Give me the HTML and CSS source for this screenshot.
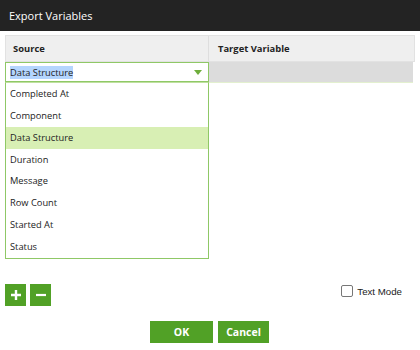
FILE: index.html
```html
<!DOCTYPE html>
<html>
<head>
<meta charset="utf-8">
<link rel="stylesheet" href="styles.css">
</head>
<body>
<div class="dialog">
  <div class="titlebar">Export Variables</div>
  <div class="content">
    <div class="table">
      <div class="thead">
        <div class="th th-source">Source</div>
        <div class="th th-target">Target Variable</div>
      </div>
      <div class="row">
        <div class="cell-source">
          <div class="select">
            <span class="sel-text">Data Structure</span>
            <span class="caret"></span>
          </div>
          <div class="menu">
            <div class="opt">Completed At</div>
            <div class="opt">Component</div>
            <div class="opt active">Data Structure</div>
            <div class="opt">Duration</div>
            <div class="opt">Message</div>
            <div class="opt">Row Count</div>
            <div class="opt">Started At</div>
            <div class="opt">Status</div>
          </div>
        </div>
        <div class="cell-target"></div>
      </div>
    </div>
    <div class="spacer"></div>
    <div class="tools">
      <div class="btns">
        <button class="icon-btn" aria-label="add">
          <svg width="12" height="12" viewBox="0 0 12 12"><path d="M6 1v10M1 6h10" stroke="#fff" stroke-width="2.4"/></svg>
        </button>
        <button class="icon-btn" aria-label="remove">
          <svg width="12" height="12" viewBox="0 0 12 12"><path d="M1 6h10" stroke="#fff" stroke-width="2.2"/></svg>
        </button>
      </div>
      <label class="textmode"><span class="cb"></span>Text Mode</label>
    </div>
    <div class="footer">
      <button class="btn btn-ok">OK</button>
      <button class="btn btn-cancel">Cancel</button>
    </div>
  </div>
</div>
</body>
</html>
```
FILE: styles.css
```css
html, body {
  margin: 0;
  padding: 0;
  background: #fff;
}
body {
  width: 420px;
  height: 350px;
  overflow: hidden;
  font-family: "Open Sans", "DejaVu Sans", sans-serif;
  color: #222;
}
.dialog {
  display: flex;
  flex-direction: column;
  height: 350px;
}
.titlebar {
  height: 31px;
  background: #232323;
  color: #fff;
  font-size: 11px;
  line-height: 31px;
  padding-left: 9px;
  box-sizing: border-box;
}
.content {
  padding: 4px 5px 0 5px;
  display: flex;
  flex-direction: column;
  flex: 1;
}
.table {
  width: 410px;
}
.thead {
  display: flex;
  height: 27px;
  background: #efefef;
  border: 1px solid #e2e2e2;
  box-sizing: border-box;
}
.th {
  font-size: 9.4px;
  font-weight: 700;
  line-height: 25px;
  color: #222;
}
.th-source {
  width: 203px;
  padding-left: 7px;
  box-sizing: border-box;
  border-right: 1px solid #dedede;
}
.th-target {
  padding-left: 9px;
}
.row {
  display: flex;
  height: 20px;
  background: #dcdcdc;
  width: 408px;
  border-bottom: 1px solid #e3f0cf;
}
.cell-source {
  width: 204px;
  position: relative;
}
.cell-target {
  flex: 1;
}
.select {
  height: 20px;
  box-sizing: border-box;
  border: 1px solid #8fc866;
  background: #fff;
  display: flex;
  align-items: center;
  padding-left: 4px;
  padding-right: 6px;
  justify-content: space-between;
}
.sel-text {
  font-size: 9.3px;
  background: #b4d5fe;
  line-height: 13px;
}
.caret {
  width: 0;
  height: 0;
  border-left: 4.5px solid transparent;
  border-right: 4.5px solid transparent;
  border-top: 5px solid #6fae3c;
}
.menu {
  position: absolute;
  left: 0;
  top: 20px;
  width: 204px;
  box-sizing: border-box;
  border: 1px solid #8fc866;
  border-top: 1px solid #bfe09f;
  background: #fff;
  z-index: 2;
}
.opt {
  height: 21.85px;
  line-height: 21.85px;
  font-size: 9.3px;
  padding-left: 4px;
  color: #222;
}
.opt.active {
  background: #d8efb4;
}
.spacer {
  height: 201px;
}
.tools {
  display: flex;
  justify-content: space-between;
  align-items: flex-start;
}
.btns {
  display: flex;
  gap: 4px;
}
.icon-btn {
  width: 21px;
  height: 22px;
  border: none;
  padding: 0;
  margin: 0;
  background: #51a126;
  display: flex;
  align-items: center;
  justify-content: center;
}
.textmode {
  display: flex;
  align-items: center;
  font-size: 9.7px;
  color: #222;
  margin-top: 1px;
  margin-right: 13px;
  font-family: "Liberation Sans", Arial, sans-serif;
}
.cb {
  width: 10px;
  height: 10px;
  border: 1px solid #777;
  border-radius: 2px;
  margin-right: 4px;
  background: #fff;
}
.footer {
  display: flex;
  justify-content: center;
  gap: 5px;
  margin-top: 15px;
  padding-right: 1px;
}
.btn {
  height: 22px;
  border: none;
  padding: 0;
  margin: 0;
  background: #51a126;
  color: #fff;
  font-family: "Open Sans", sans-serif;
  font-weight: 700;
  font-size: 10.5px;
}
.btn-ok {
  width: 63px;
}
.btn-cancel {
  width: 51px;
}
```
